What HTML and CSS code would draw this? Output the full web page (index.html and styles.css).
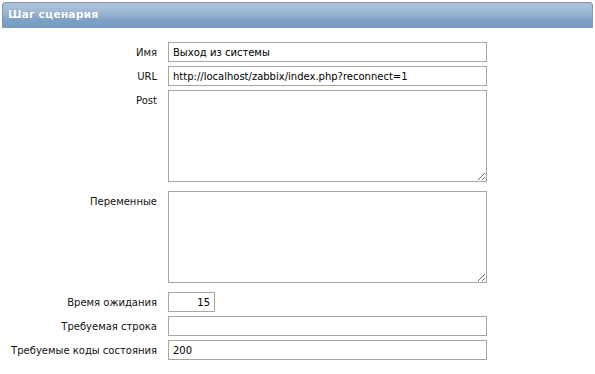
FILE: index.html
```html
<!DOCTYPE html>
<html lang="ru">
<head>
  <meta charset="UTF-8">
  <title>Шаг сценария</title>
  <link rel="stylesheet" href="styles.css">
</head>
<body>
  <div class="header">Шаг сценария</div>

  <form class="step-form">
    <label class="label" for="name">Имя</label>
    <input id="name" class="field" type="text" value="Выход из системы">

    <label class="label" for="url">URL</label>
    <input id="url" class="field" type="text" value="http://localhost/zabbix/index.php?reconnect=1">

    <label class="label top" for="post">Post</label>
    <textarea id="post" class="field area"></textarea>

    <label class="label top" for="vars">Переменные</label>
    <textarea id="vars" class="field area"></textarea>

    <label class="label" for="timeout">Время ожидания</label>
    <input id="timeout" class="field short" type="text" value="15">

    <label class="label" for="required">Требуемая строка</label>
    <input id="required" class="field" type="text" value="">

    <label class="label" for="codes">Требуемые коды состояния</label>
    <input id="codes" class="field" type="text" value="200">
  </form>
</body>
</html>
```

FILE: styles.css
```css
body {
  margin: 0;
  font-family: "DejaVu Sans", Verdana, sans-serif;
  font-size: 10px;
  color: #111;
  background: #fff;
}

.header {
  margin: 2px 2px 0 2px;
  height: 26px;
  box-sizing: border-box;
  padding: 0 5px;
  border: 1px solid #7d98b6;
  border-radius: 3px 3px 0 0;
  background: linear-gradient(#aec4db 0%, #9db7d3 40%, #7ea1c6 70%, #779bc2 100%);
  color: #fff;
  font-size: 11px;
  font-weight: bold;
  line-height: 24px;
  text-shadow: 0 0 1px rgba(60, 90, 130, 0.4);
}

.step-form {
  display: grid;
  grid-template-columns: 157px 319px;
  column-gap: 11px;
  row-gap: 4px;
  padding-top: 14px;
}

/* подписи прижаты вправо, длинные не переносятся */
.label {
  display: flex;
  justify-content: flex-end;
  align-items: center;
  white-space: nowrap;
}

.label.top {
  align-items: flex-start;
  padding-top: 5px;
}

.field {
  box-sizing: border-box;
  height: 20px;
  margin: 0;
  padding: 0 4px;
  border: 1px solid #a8a698;
  font-family: "DejaVu Sans", Verdana, sans-serif;
  font-size: 10px;
  color: #000;
  background: #fff;
  outline: none;
}

.field.area {
  height: 92px;
  margin-bottom: 5px;
  padding: 3px 4px;
  resize: both;
}

.field.short {
  width: 47px;
  text-align: right;
}
```
